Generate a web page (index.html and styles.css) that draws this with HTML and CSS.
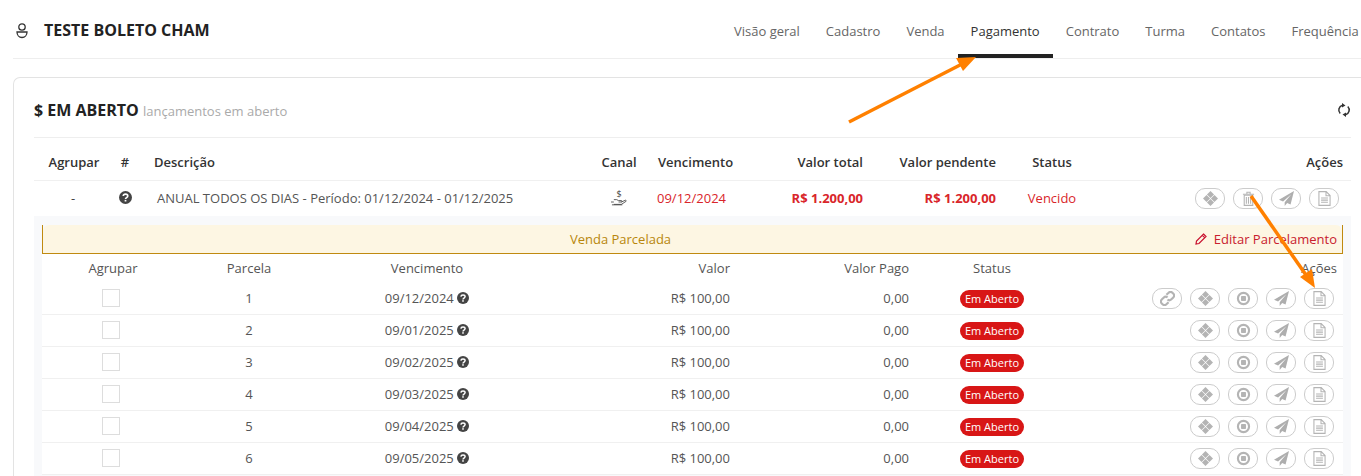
FILE: index.html
```html
<!DOCTYPE html>
<html lang="pt-BR">
<head>
<meta charset="utf-8">
<title>Pagamento</title>
<link rel="stylesheet" href="styles.css">
</head>
<body>
<svg class="defs" aria-hidden="true">
  <symbol id="i-q" viewBox="0 0 12 12"><circle cx="6" cy="6" r="6" fill="#444"/><path d="M3.900 4.600C4 3.400 4.900 2.900 6 2.900c1.200 0 2.100.7 2.100 1.700 0 1.500-2.100 1.500-2.100 2.800" fill="none" stroke="#fff" stroke-width="1.500"/><rect x="5.200" y="8.200" width="1.600" height="1.500" fill="#fff"/></symbol>
  <symbol id="i-dia" viewBox="0 0 14 14"><path d="M7 0l3.300 3.300L7 6.600 3.700 3.300zM3.300 3.700L6.600 7l-3.300 3.300L0 7zM10.700 3.700L14 7l-3.300 3.300L7.400 7zM7 7.400l3.300 3.300L7 14l-3.300-3.300z" fill="#b4b4b4"/></symbol>
  <symbol id="i-stop" viewBox="0 0 14 14"><circle cx="7" cy="7" r="5.200" fill="none" stroke="#b4b4b4" stroke-width="2"/><rect x="4.700" y="4.700" width="4.600" height="4.600" rx=".6" fill="#b4b4b4"/></symbol>
  <symbol id="i-plane" viewBox="0 0 14 14"><path d="M14 0L0 8.200l3.800 1.500L11.500 3 5.300 10.500v3.500l2.300-2.700 3.200 1.400z" fill="#aeaeae"/></symbol>
  <symbol id="i-file" viewBox="0 0 12 14"><path d="M.8.600h6.800l3.600 3.600v9.200H.8zM7.400.8v3.600h3.800" fill="none" stroke="#b4b4b4" stroke-width="1"/><path d="M2.800 6.500h6.400M2.800 8.500h6.400M2.800 10.500h6.400" stroke="#b4b4b4" stroke-width="1"/></symbol>
  <symbol id="i-trash" viewBox="0 0 12 14"><path d="M2 4h8v9.400H2z" fill="none" stroke="#b4b4b4" stroke-width="1"/><path d="M.8 3h10.400M4.500 3V1.200h3V3M4 5.500v6.500M6 5.500v6.500M8 5.500v6.500" fill="none" stroke="#b4b4b4" stroke-width="1"/></symbol>
  <symbol id="i-link" viewBox="0 0 14 14"><path d="M6 3.600l2-2a2.400 2.400 0 0 1 3.600 0l.8.8a2.400 2.400 0 0 1 0 3.600l-2 2a2.400 2.400 0 0 1-3.400 0M8 10.400l-2 2a2.400 2.400 0 0 1-3.600 0l-.8-.8a2.400 2.400 0 0 1 0-3.600l2-2a2.400 2.400 0 0 1 3.400 0" fill="none" stroke="#b4b4b4" stroke-width="2"/></symbol>
</svg>

<header class="top">
  <div class="who">
    <svg class="user" viewBox="0 0 12 16"><circle cx="6" cy="4" r="3.200" fill="none" stroke="#333" stroke-width="1.300"/><path d="M1 9h10c0 3-2 5.500-5 5.500S1 12 1 9z" fill="none" stroke="#333" stroke-width="1.300"/></svg>
    <span class="name">TESTE BOLETO CHAM</span>
  </div>
  <nav class="tabs">
    <a class="tab">Visão geral</a>
    <a class="tab">Cadastro</a>
    <a class="tab">Venda</a>
    <a class="tab active">Pagamento</a>
    <a class="tab">Contrato</a>
    <a class="tab">Turma</a>
    <a class="tab">Contatos</a>
    <a class="tab">Frequência</a>
  </nav>
</header>

<section class="card">
  <div class="card-head">
    <h2 class="card-title">$ EM ABERTO <small class="card-sub">lançamentos em aberto</small></h2>
    <svg class="refresh" viewBox="0 0 14 14"><path d="M3.200 10.500A5 5 0 0 1 5.500 2.200M10.800 3.500A5 5 0 0 1 8.500 11.800" fill="none" stroke="#333" stroke-width="1.500"/><path d="M5 0l3.500 2.400L5 4.400zM9 14l-3.500-2.400L9 9.600z" fill="#333"/></svg>
  </div>

  <div class="main-row main-head">
    <div class="c head-first">Agrupar</div><div class="c">#</div><div class="desc-h">Descrição</div><div class="c">Canal</div><div class="venc">Vencimento</div><div class="r">Valor total</div><div class="r">Valor pendente</div><div class="c">Status</div><div class="r">Ações</div>
  </div>
  <div class="main-row main-data">
    <div class="c">-</div>
    <div class="c cell-icon"><svg class="q"><use href="#i-q"/></svg></div>
    <div class="desc">ANUAL TODOS OS DIAS - Período: 01/12/2024 - 01/12/2025</div>
    <div class="c cell-icon">
      <span class="canal"><span class="canal-sign">$</span><svg class="hand" viewBox="0 0 18 8"><path d="M3 1.500h3l2 1h3c1 0 1 1.500 0 1.500H8M11 4l4-1.800c1-.3 1.500.6.800 1.200L11 6.500H3M1 1.500v0M0 4h3M1 7h11" fill="none" stroke="#444" stroke-width=".9"/></svg></span>
    </div>
    <div class="venc red">09/12/2024</div>
    <div class="r red strong">R$ 1.200,00</div>
    <div class="r red strong">R$ 1.200,00</div>
    <div class="c red">Vencido</div>
    <div class="acts acts-main">
      <span class="btn"><svg class="ic"><use href="#i-dia"/></svg></span>
      <span class="btn"><svg class="ic"><use href="#i-trash"/></svg></span>
      <span class="btn"><svg class="ic"><use href="#i-plane"/></svg></span>
      <span class="btn"><svg class="ic"><use href="#i-file"/></svg></span>
    </div>
  </div>

  <div class="detail">
    <div class="alert">
      <div class="alert-fill">
        <span class="alert-text">Venda Parcelada</span>
        <a class="alert-edit"><svg class="pencil" viewBox="0 0 12 12"><path d="M8.500 1l2.500 2.500-7 7L1 11l.5-3zM7.300 2.300l2.400 2.400" fill="none" stroke="#c8102e" stroke-width="1.200"/></svg>Editar Parcelamento</a>
      </div>
    </div>
    <div class="sub-row sub-head">
      <div class="c">Agrupar</div><div class="c">Parcela</div><div class="c">Vencimento</div><div class="r">Valor</div><div class="r">Valor Pago</div><div class="c">Status</div><div class="r sub-acts-h">Ações</div>
    </div>

    <div class="sub-row sub-data">
      <div class="c"><span class="check"></span></div><div class="c">1</div><div class="c date">09/12/2024 <svg class="q"><use href="#i-q"/></svg></div><div class="r">R$ 100,00</div><div class="r">0,00</div><div class="c"><span class="badge">Em Aberto</span></div>
      <div class="acts"><span class="btn"><svg class="ic"><use href="#i-link"/></svg></span><span class="btn"><svg class="ic"><use href="#i-dia"/></svg></span><span class="btn"><svg class="ic"><use href="#i-stop"/></svg></span><span class="btn"><svg class="ic"><use href="#i-plane"/></svg></span><span class="btn"><svg class="ic"><use href="#i-file"/></svg></span></div>
    </div>
    <div class="sub-row sub-data">
      <div class="c"><span class="check"></span></div><div class="c">2</div><div class="c date">09/01/2025 <svg class="q"><use href="#i-q"/></svg></div><div class="r">R$ 100,00</div><div class="r">0,00</div><div class="c"><span class="badge">Em Aberto</span></div>
      <div class="acts"><span class="btn"><svg class="ic"><use href="#i-dia"/></svg></span><span class="btn"><svg class="ic"><use href="#i-stop"/></svg></span><span class="btn"><svg class="ic"><use href="#i-plane"/></svg></span><span class="btn"><svg class="ic"><use href="#i-file"/></svg></span></div>
    </div>
    <div class="sub-row sub-data">
      <div class="c"><span class="check"></span></div><div class="c">3</div><div class="c date">09/02/2025 <svg class="q"><use href="#i-q"/></svg></div><div class="r">R$ 100,00</div><div class="r">0,00</div><div class="c"><span class="badge">Em Aberto</span></div>
      <div class="acts"><span class="btn"><svg class="ic"><use href="#i-dia"/></svg></span><span class="btn"><svg class="ic"><use href="#i-stop"/></svg></span><span class="btn"><svg class="ic"><use href="#i-plane"/></svg></span><span class="btn"><svg class="ic"><use href="#i-file"/></svg></span></div>
    </div>
    <div class="sub-row sub-data">
      <div class="c"><span class="check"></span></div><div class="c">4</div><div class="c date">09/03/2025 <svg class="q"><use href="#i-q"/></svg></div><div class="r">R$ 100,00</div><div class="r">0,00</div><div class="c"><span class="badge">Em Aberto</span></div>
      <div class="acts"><span class="btn"><svg class="ic"><use href="#i-dia"/></svg></span><span class="btn"><svg class="ic"><use href="#i-stop"/></svg></span><span class="btn"><svg class="ic"><use href="#i-plane"/></svg></span><span class="btn"><svg class="ic"><use href="#i-file"/></svg></span></div>
    </div>
    <div class="sub-row sub-data">
      <div class="c"><span class="check"></span></div><div class="c">5</div><div class="c date">09/04/2025 <svg class="q"><use href="#i-q"/></svg></div><div class="r">R$ 100,00</div><div class="r">0,00</div><div class="c"><span class="badge">Em Aberto</span></div>
      <div class="acts"><span class="btn"><svg class="ic"><use href="#i-dia"/></svg></span><span class="btn"><svg class="ic"><use href="#i-stop"/></svg></span><span class="btn"><svg class="ic"><use href="#i-plane"/></svg></span><span class="btn"><svg class="ic"><use href="#i-file"/></svg></span></div>
    </div>
    <div class="sub-row sub-data">
      <div class="c"><span class="check"></span></div><div class="c">6</div><div class="c date">09/05/2025 <svg class="q"><use href="#i-q"/></svg></div><div class="r">R$ 100,00</div><div class="r">0,00</div><div class="c"><span class="badge">Em Aberto</span></div>
      <div class="acts"><span class="btn"><svg class="ic"><use href="#i-dia"/></svg></span><span class="btn"><svg class="ic"><use href="#i-stop"/></svg></span><span class="btn"><svg class="ic"><use href="#i-plane"/></svg></span><span class="btn"><svg class="ic"><use href="#i-file"/></svg></span></div>
    </div>
  </div>
</section>

<svg class="arrows" viewBox="0 0 1361 476" aria-hidden="true">
  <path d="M849 122L962 64" stroke="#ff8000" stroke-width="3.500" fill="none"/>
  <path d="M976 57L956 58l7 13z" fill="#ff8000"/>
  <path d="M1251 196L1306 275" stroke="#ff8000" stroke-width="3.500" fill="none"/>
  <path d="M1315 288l-15-11 12-8z" fill="#ff8000"/>
</svg>
</body>
</html>
```
FILE: styles.css
```css
* { box-sizing: border-box; }
html, body { margin: 0; height: 476px; overflow: hidden; background: #fff; }
body { position: relative; font-family: "Open Sans", sans-serif; font-size: 13px; color: #444; }
.defs { position: absolute; width: 0; height: 0; }

.top { display: flex; height: 59px; margin-left: 13px; border-bottom: 1px solid #eee; white-space: nowrap; }
.who { flex: 0 0 708px; display: flex; align-items: center; padding-top: 3px; }
.user { width: 12px; height: 16px; margin: 0 0 0 3px; }
.name { margin-left: 16px; margin-top: -1px; font-size: 16px; font-weight: 700; color: #222; }
.tabs { display: flex; flex: none; }
.tab { height: 58px; padding: 22px 13px 0; color: #666; border-bottom: 4px solid transparent; line-height: 18px; }
.tab.active { color: #333; border-bottom-color: #222; }

.card { margin: 18px 0 0 13px; width: 1358px; height: 420px; padding: 0 20px; border: 1px solid #e3e3e3; border-radius: 7px 0 0 0; border-right: 0; }
.card-head { display: flex; align-items: center; justify-content: space-between; height: 60px; padding-top: 4px; border-bottom: 1px solid #eee; }
.card-title { margin: 0; font-size: 16px; font-weight: 700; color: #222; }
.card-sub { font-size: 13px; font-weight: 400; color: #aaa; }
.refresh { width: 14px; height: 14px; }

.main-row { display: grid; grid-template-columns: 78px 26px 451px 60px 108px 114px 133px 96px 251px; align-items: center; width: 1317px; }
.main-head { height: 43px; padding-top: 5px; border-bottom: 1px solid #f0f0f0; font-weight: 600; color: #333; }
.main-head .head-first { padding-left: 2px; }
.main-head .venc { padding-left: 9px; }
.main-data { height: 35px; }
.main-data > :nth-child(-n+8) { padding-bottom: 2px; }
.c { text-align: center; }
.r { text-align: right; padding-right: 8px; }
.desc-h { padding-left: 16px; }
.desc { padding-left: 19px; color: #555; }
.venc { padding-left: 8px; }
.red { color: #d9252a; }
.strong { font-weight: 700; }
.cell-icon { display: flex; justify-content: center; }
.q { width: 13px; height: 13px; vertical-align: -2px; }
.date .q { width: 12px; height: 12px; vertical-align: -1px; }
.canal { display: flex; flex-direction: column; align-items: center; width: 18px; }
.canal-sign { font-size: 9px; line-height: 9px; color: #444; }
.hand { width: 17px; height: 8px; }

.acts { display: flex; justify-content: flex-end; gap: 8px; padding-right: 9px; }
.acts-main { padding-right: 12px; }
.btn { display: flex; align-items: center; justify-content: center; width: 30px; height: 21px; border: 1px solid #ccc; border-radius: 10px; background: #fff; }
.ic { width: 15px; height: 15px; }

.detail { width: 1317px; height: 270px; padding: 9px 8px 0; background: #f8f9fb; }
.alert { height: 29px; border: 1px solid #c08a10; border-top: 0; }
.alert-fill { position: relative; display: flex; align-items: center; justify-content: center; height: 28px; padding-right: 144px; background: #fdf6e3; border-radius: 6px 6px 0 0; }
.alert-text { color: #b8860b; }
.alert-edit { position: absolute; right: 5px; display: flex; align-items: center; gap: 7px; color: #c8202e; }
.pencil { width: 12px; height: 12px; }

.sub-row { display: grid; grid-template-columns: 142px 130px 226px 198px 179px 150px 276px; align-items: center; background: #fff; color: #555; }
.sub-head { height: 29px; padding-bottom: 2px; }
.sub-acts-h { padding-right: 6px; }
.sub-data { height: 32px; border-bottom: 1px solid #f0f0f0; }
.sub-data > :nth-child(-n+5) { padding-bottom: 2px; }
.check { display: block; width: 18px; height: 18px; margin-left: 60px; border: 1px solid #ddd; background: #fff; }
.badge { display: inline-block; width: 64px; height: 18px; border-radius: 9px; background: #d81616; color: #fff; font-size: 11px; line-height: 18px; text-align: center; }

.arrows { position: absolute; left: 0; top: 0; width: 1361px; height: 476px; pointer-events: none; }
```
